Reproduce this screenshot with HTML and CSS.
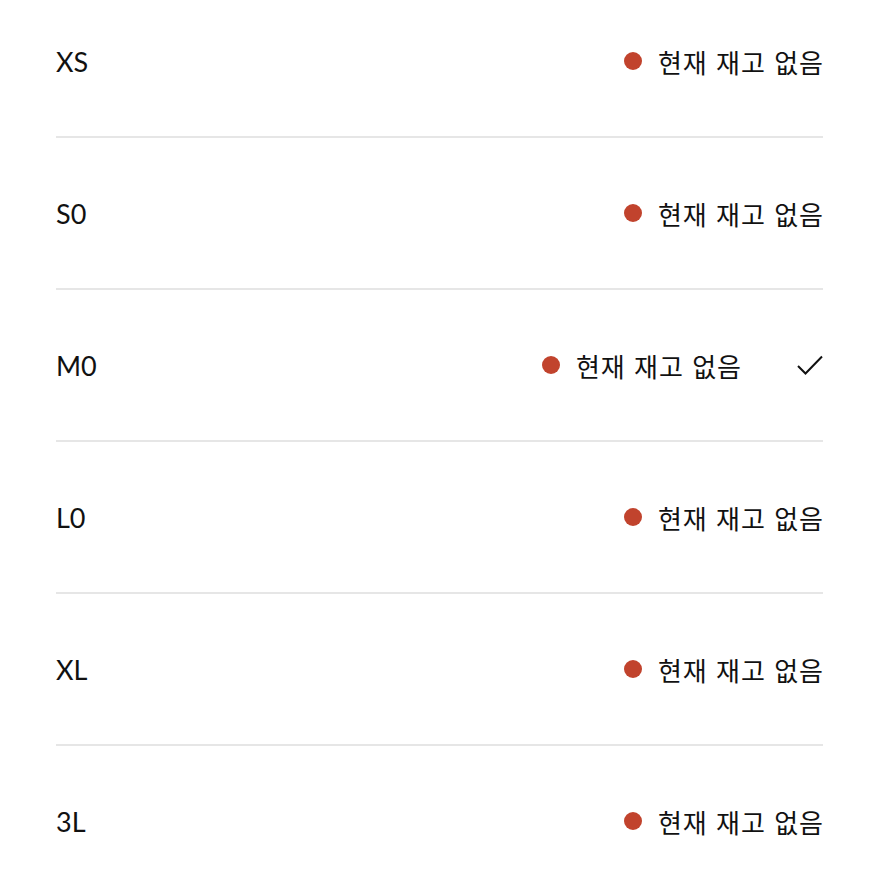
FILE: index.html
```html
<!DOCTYPE html>
<html lang="ko">
<head>
    <meta charset="UTF-8">
    <meta name="viewport" content="width=device-width, initial-scale=1.0">
    <link rel="stylesheet" href="styles.css">
</head>
<body>
    <ul class="sizes">
        <li class="size-row">
            <span class="size-name">XS</span>
            <span class="stock"><span class="dot"></span>현재 재고 없음</span>
        </li>
        <li class="size-row">
            <span class="size-name">S0</span>
            <span class="stock"><span class="dot"></span>현재 재고 없음</span>
        </li>
        <li class="size-row selected">
            <span class="size-name">M0</span>
            <span class="stock"><span class="dot"></span>현재 재고 없음</span>
            <svg class="check" width="26" height="20" viewBox="0 0 26 20">
                <path d="M1 11 L8.5 18.5 L25 1.5" fill="none" stroke="#111" stroke-width="2"/>
            </svg>
        </li>
        <li class="size-row">
            <span class="size-name">L0</span>
            <span class="stock"><span class="dot"></span>현재 재고 없음</span>
        </li>
        <li class="size-row">
            <span class="size-name">XL</span>
            <span class="stock"><span class="dot"></span>현재 재고 없음</span>
        </li>
        <li class="size-row">
            <span class="size-name">3L</span>
            <span class="stock"><span class="dot"></span>현재 재고 없음</span>
        </li>
    </ul>
</body>
</html>
```

FILE: styles.css
```css
body {
    margin: 0;
    background: #fff;
    color: #111;
    font-family: "Noto Sans CJK KR", sans-serif;
    overflow: hidden;
}

.sizes {
    list-style: none;
    margin: -14px 0 0 0;
    padding: 0 56px;
}

.size-row {
    display: flex;
    align-items: center;
    height: 150px;
    border-bottom: 2px solid #e6e6e6;
}

.size-row:last-child {
    border-bottom: none;
}

.size-name {
    font-family: "Lato", "Open Sans", sans-serif;
    font-size: 27px;
    flex: 1;
}

.stock {
    display: flex;
    align-items: center;
    font-size: 26px;
    letter-spacing: 1px;
    margin-right: -1px;
}

.dot {
    width: 18px;
    height: 18px;
    border-radius: 50%;
    background: #c1432d;
    margin-right: 16px;
}

.check {
    margin-left: 56px;
}
```
